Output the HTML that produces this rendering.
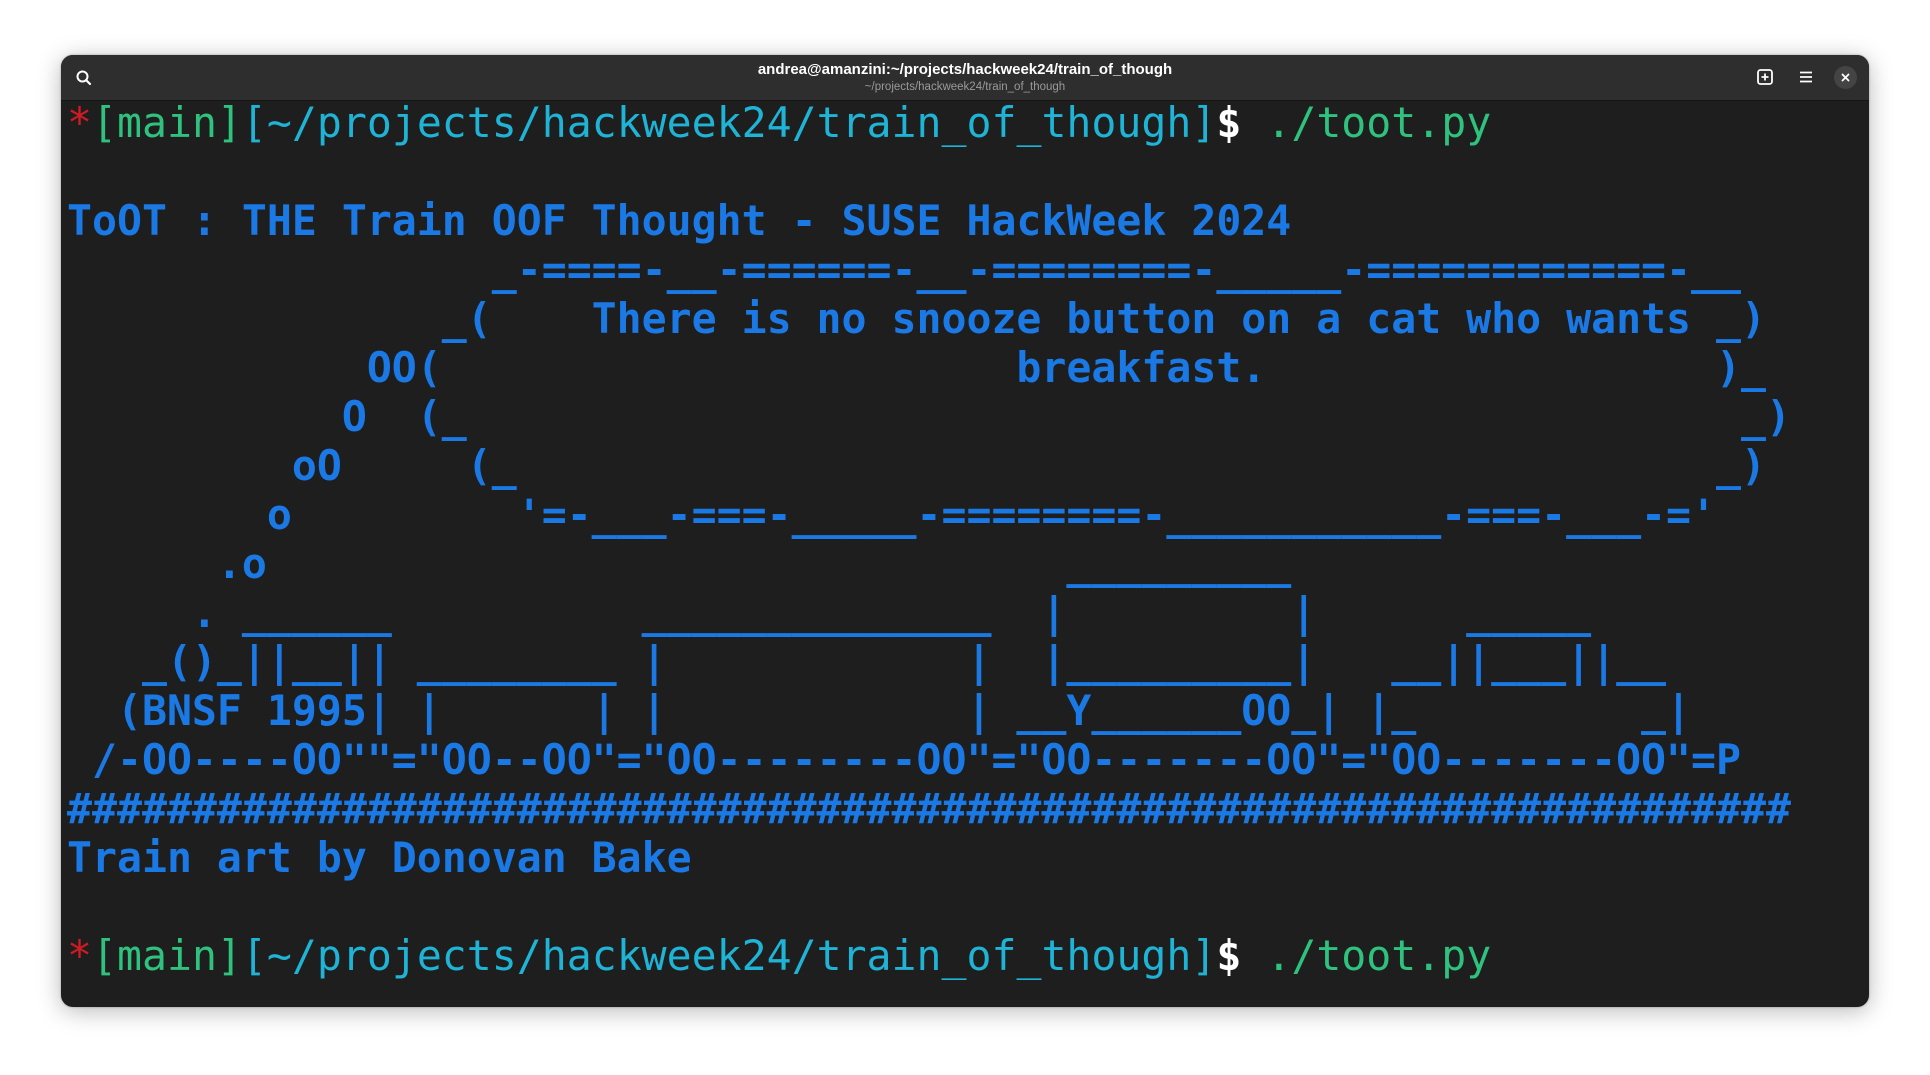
<!DOCTYPE html>
<html><head><meta charset="utf-8"><style>
html,body{margin:0;padding:0;background:#fff;width:1930px;height:1075px;overflow:hidden}
.win{position:absolute;left:61px;top:55px;width:1808px;height:952px;background:#1e1e1e;border-radius:12px;box-shadow:0 4px 24px rgba(0,0,0,.28),0 0 2px rgba(0,0,0,.3);overflow:hidden}
.hdr{position:absolute;left:0;top:0;right:0;height:45px;background:#2e2e2e;border-bottom:1px solid #151515}
.t1{position:absolute;left:0;right:0;top:6px;text-align:center;color:#fff;font:bold 15px "Liberation Sans",sans-serif}
.t2{position:absolute;left:0;right:0;top:26px;text-align:center;color:#9a9a9a;font:11.5px "Liberation Sans",sans-serif}
pre{position:absolute;left:6px;top:43px;margin:0;font-family:"DejaVu Sans Mono","Liberation Mono",monospace;font-size:41.5px;line-height:49px;color:#1b79e6;font-weight:bold}
.n{font-weight:normal}
.r{color:#d01b24}.g{color:#2ec27e}.c{color:#1fb3d5}.w{color:#fff}
</style></head><body>
<div class="win">
<div class="hdr">
<svg style="position:absolute;left:14px;top:14px" width="18" height="18" viewBox="0 0 18 18"><circle cx="7.5" cy="7.5" r="5" fill="none" stroke="#fff" stroke-width="2"/><path d="M11 11l4 4" stroke="#fff" stroke-width="2.2" stroke-linecap="round"/></svg>
<div class="t1">andrea@amanzini:~/projects/hackweek24/train_of_though</div>
<div class="t2">~/projects/hackweek24/train_of_though</div>
<svg style="position:absolute;left:1695px;top:13px" width="18" height="18" viewBox="0 0 18 18"><rect x="2" y="2" width="14" height="14" rx="2.5" fill="none" stroke="#fff" stroke-width="1.8"/><path d="M9 5.5v7M5.5 9h7" stroke="#fff" stroke-width="1.8"/></svg>
<svg style="position:absolute;left:1736px;top:13px" width="18" height="18" viewBox="0 0 18 18"><path d="M3 4.5h12M3 9h12M3 13.5h12" stroke="#fff" stroke-width="1.8"/></svg>
<div style="position:absolute;left:1773px;top:11px;width:23px;height:23px;border-radius:50%;background:#444"></div>
<svg style="position:absolute;left:1777px;top:15px" width="15" height="15" viewBox="0 0 15 15"><path d="M4.5 4.5l6 6M10.5 4.5l-6 6" stroke="#fff" stroke-width="1.8" stroke-linecap="round"/></svg>
</div>
<pre><span class="n"><span class="r">*</span><span class="g">[main]</span><span class="c">[~/projects/hackweek24/train_of_though]</span><span class="w" style="font-weight:bold">$</span> <span class="g">./toot.py</span></span>

ToOT : THE Train OOF Thought - SUSE HackWeek 2024
                 _-====-__-======-__-========-_____-============-__
               _(    There is no snooze button on a cat who wants _)
            OO(                       breakfast.                  )_
           O  (_                                                   _)
         oO     (_                                                _)
        o         '=-___-===-_____-========-___________-===-___-='
      .o                                _________
     . ______          ______________  |         |      _____
   _()_||__|| ________ |            |  |_________|   __||___||__
  (BNSF 1995| |      | |            | __Y______OO_| |_         _|
 /-OO----OO""="OO--OO"="OO--------OO"="OO-------OO"="OO-------OO"=P
#####################################################################
Train art by Donovan Bake

<span class="n"><span class="r">*</span><span class="g">[main]</span><span class="c">[~/projects/hackweek24/train_of_though]</span><span class="w" style="font-weight:bold">$</span> <span class="g">./toot.py</span></span></pre>
</div>
</body></html>
